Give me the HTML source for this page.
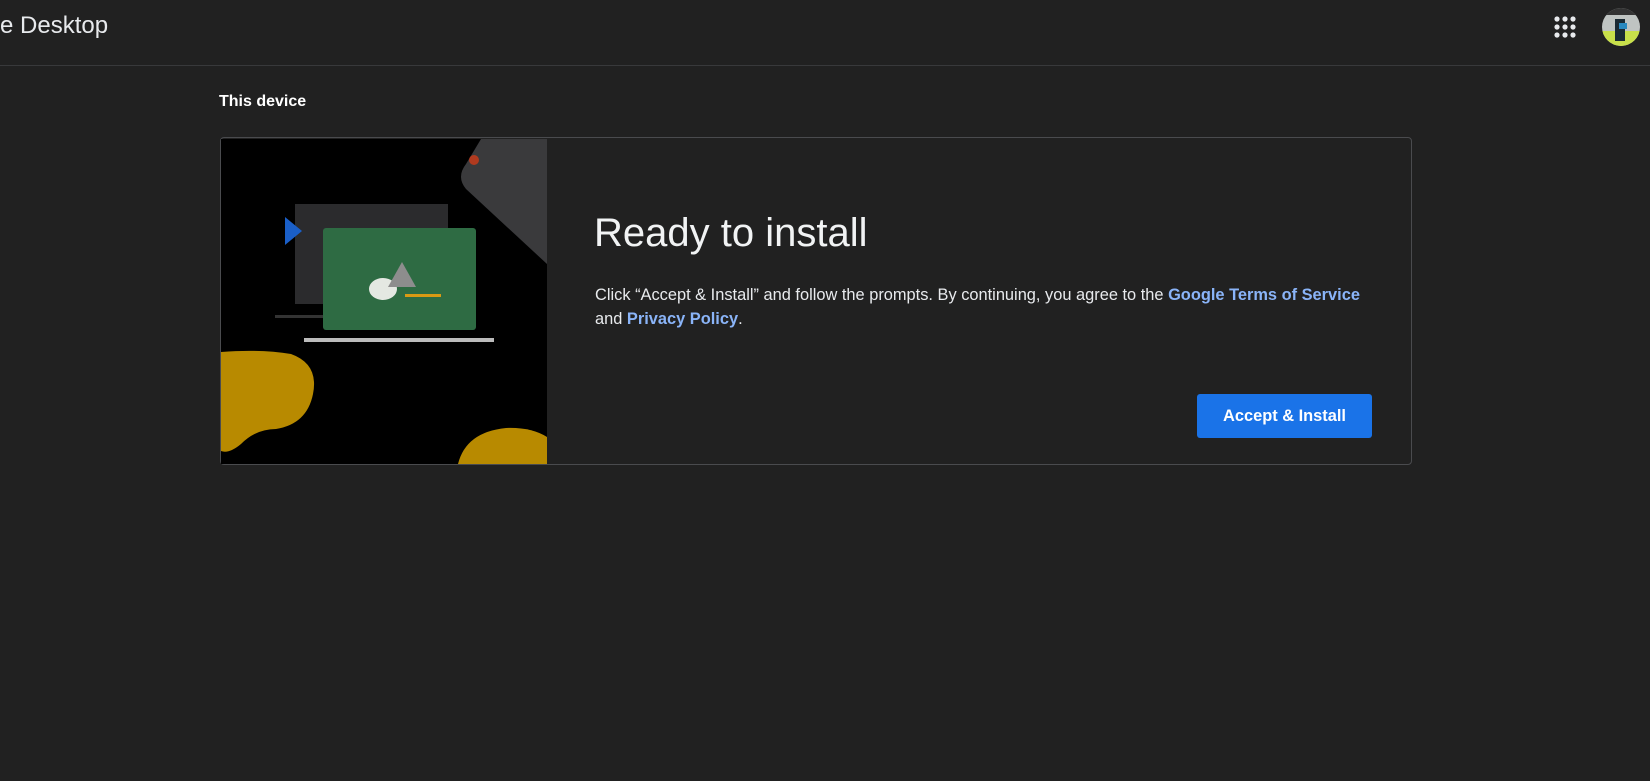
<!DOCTYPE html>
<html><head><style>
body{margin:0;width:1650px;height:781px;background:#212121;font-family:"Liberation Sans",Arial,sans-serif;overflow:hidden;position:relative;color:#e8eaed}
.hdr{position:absolute;left:0;top:0;width:1650px;height:65px;border-bottom:1px solid #38393b;background:#212121}
.abs{position:absolute}
</style></head><body>
<div class="hdr"></div>
<div class="abs" style="left:0;top:12px;font-size:24px;color:#e8eaed">e Desktop</div>
<svg class="abs" style="left:1553px;top:15px" width="24" height="24"><g fill="#e8eaed">
<circle cx="4" cy="4" r="2.6"/><circle cx="12" cy="4" r="2.6"/><circle cx="20" cy="4" r="2.6"/>
<circle cx="4" cy="12" r="2.6"/><circle cx="12" cy="12" r="2.6"/><circle cx="20" cy="12" r="2.6"/>
<circle cx="4" cy="20" r="2.6"/><circle cx="12" cy="20" r="2.6"/><circle cx="20" cy="20" r="2.6"/></g></svg>
<svg class="abs" style="left:1601px;top:7px" width="40" height="40"><defs><clipPath id="c"><circle cx="20" cy="20" r="19"/></clipPath></defs>
<g clip-path="url(#c)"><rect width="40" height="40" fill="#bfc4c2"/><rect y="24" width="40" height="16" fill="#c8e04a"/><rect x="14" y="12" width="10" height="22" fill="#1a2a33"/><rect x="18" y="16" width="8" height="6" fill="#2a8ac0"/><rect y="0" width="40" height="8" fill="#333"/></g></svg>
<div class="abs" style="left:219px;top:93px;font-size:16px;font-weight:bold;color:#fff">This device</div>
<div class="abs" style="left:220px;top:137px;width:1190px;height:326px;border:1px solid #4a4b4e;border-radius:4px;background:#212121"></div>
<svg class="abs" style="left:221px;top:139px" width="326" height="325">
<rect width="326" height="325" fill="#000"/>
<path d="M260 0 L326 0 L326 125 L245 50 Q235 38 245 25 Z" fill="#3a3a3c"/>
<circle cx="253" cy="21" r="5" fill="#b03a1f"/>
<rect x="74" y="65" width="153" height="100" fill="#2b2b2d"/>
<path d="M64 78 L81 92 L64 106 Z" fill="#1a5fc8"/>
<rect x="54" y="176" width="50" height="3" fill="#333"/>
<rect x="102" y="89" width="153" height="102" rx="3" fill="#2e6b43"/>
<ellipse cx="162" cy="150" rx="14" ry="11" fill="#e4e8e2"/>
<path d="M167 148 L181 123 L195 148 Z" fill="#8d8d8d"/>
<rect x="184" y="155" width="36" height="3" fill="#d99a14"/>
<rect x="83" y="199" width="190" height="4" fill="#bbb"/>
<path d="M0 213 Q40 210 70 215 Q98 225 92 255 Q86 285 55 290 Q35 290 20 305 Q8 315 0 312 Z" fill="#b88a00"/>
<path d="M237 325 Q245 293 285 289 Q310 288 326 298 L326 325 Z" fill="#b88a00"/>
</svg>
<div class="abs" style="left:594px;top:211px;font-size:40px;color:#f1f3f4">Ready to install</div>
<div class="abs" style="left:595px;top:283px;font-size:16.4px;line-height:24px;color:#e8eaed;width:790px">Click “Accept &amp; Install” and follow the prompts. By continuing, you agree to the <span style="color:#8ab4f8;font-weight:bold">Google Terms of Service</span><br>and <span style="color:#8ab4f8;font-weight:bold">Privacy Policy</span>.</div>
<div class="abs" style="left:1197px;top:394px;width:175px;height:44px;background:#1a73e8;border-radius:3px;color:#fff;font-size:16.4px;font-weight:bold;text-align:center;line-height:44px">Accept &amp; Install</div>
</body></html>
